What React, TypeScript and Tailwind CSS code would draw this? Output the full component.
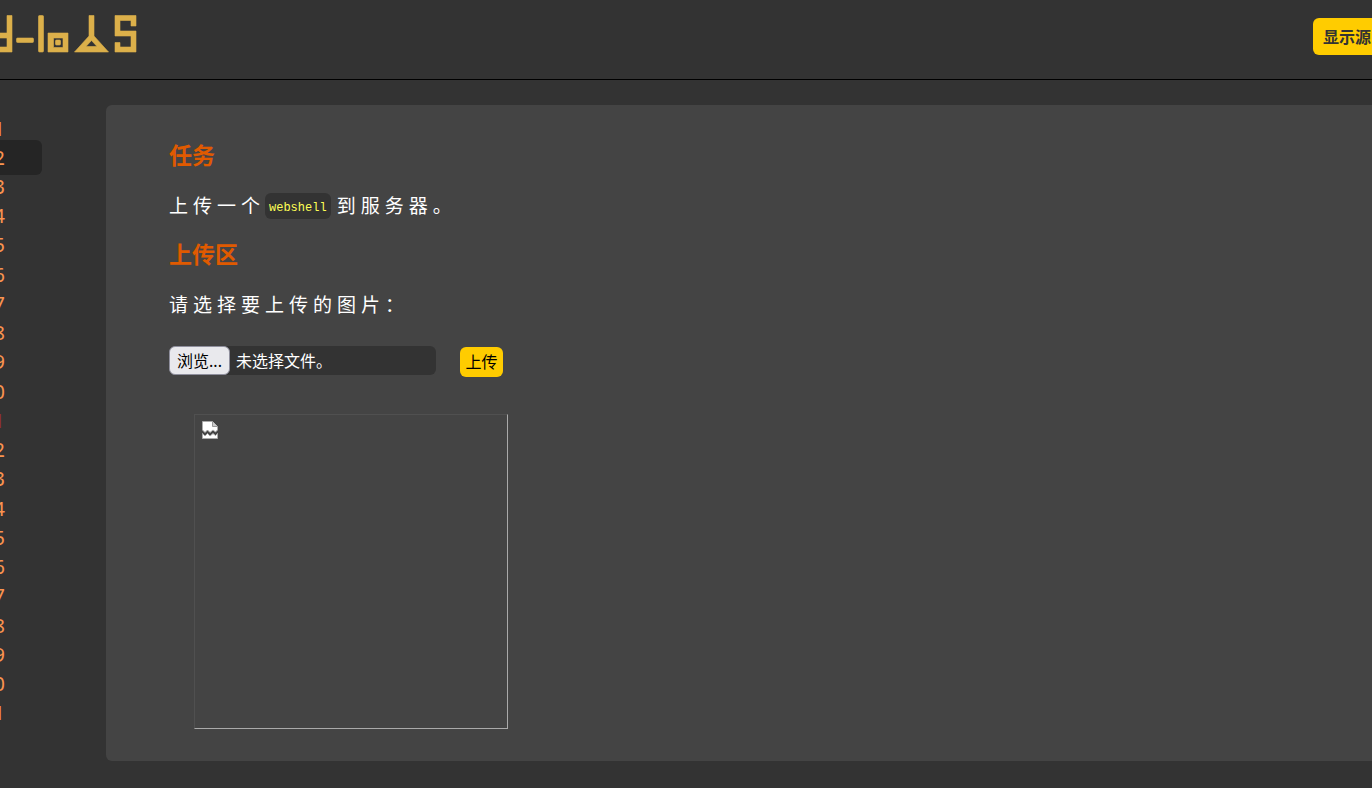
import React, { useState } from 'react'
import clsx from 'clsx'

const levels = Array.from({ length: 21 }, (_, i) => i + 1)

const Logo: React.FC = () => (
  <svg width="137" height="56" viewBox="0 0 137 56" fill="#dcb04a" stroke="#dcb04a" strokeWidth="0.6" strokeLinejoin="round" aria-hidden="true">
    <path d="M7 15.5h5V52H0v-5h7v-9H0v-5h7z" />
    <rect x="16.500" y="38" width="17" height="4.500" rx="1" />
    <rect x="38.5" y="15.5" width="5" height="36.5" rx="1" />
    <path fillRule="evenodd" d="M48 33h20v19H48zM53.5 38v9.5H63V38z" />
    <rect x="55.5" y="40" width="5" height="5" rx="1" />
    <path fillRule="evenodd" d="M89 15.5h5V36l14.500 16h-34L89 36zM91.5 40.500L86 46.500h11z" />
    <path d="M115 15.5h21V26h-5v-5.500h-11V31h16v21h-21v-9.500h5V47h11V36h-16z" />
  </svg>
)

const App: React.FC = () => {
  const [active, setActive] = useState(2)
  const [fileName, setFileName] = useState('')

  return (
    <div className="min-h-screen overflow-x-hidden bg-[#333] text-white font-['Noto_Sans','Noto_Sans_CJK_SC',sans-serif]">
      <header className="flex h-20 items-start justify-between border-b border-black">
        <Logo />
        <button className="mt-[18px] h-[37px] rounded-l-md bg-[#fc0] pl-[10px] pr-px text-base font-bold text-[#333] whitespace-nowrap">
          显示源
        </button>
      </header>

      <div className="flex pt-[25px] pb-[27px]">
        <nav className="-ml-2 mr-16 w-[50px] shrink-0 pt-[9px] pb-[33px]">
          <ul className="grid h-full auto-rows-fr">
            {levels.map((n) => (
              <li key={n} className="flex h-[29px] items-center">
                <a
                  href={`#pass-${n}`}
                  onClick={() => setActive(n)}
                  className={clsx(
                    'flex h-[35px] w-full shrink-0 items-center justify-end rounded-r-md pr-[37px] text-xl',
                    n === active && 'bg-[#252525]',
                    n === 11 ? 'text-[#932f2f]' : 'text-[#fa9450]'
                  )}
                >
                  {n % 10}
                </a>
              </li>
            ))}
          </ul>
        </nav>

        <main className="min-w-0 flex-1 rounded-l-md bg-[#444] pt-[31px] pb-8 pl-[63px]">
          <h3 className="text-[23px] leading-[38px] font-bold text-[#e05a00]">任务</h3>
          <p className="mt-[13px] flex h-[38px] items-center text-[19px] tracking-[5px]">
            上传一个
            <code className="mr-[6px] flex h-[26px] items-center rounded-md bg-[#333] px-1 pt-1 text-xs tracking-normal text-[#ff5] font-['Liberation_Mono',monospace]">
              webshell
            </code>
            到服务器。
          </p>
          <h3 className="mt-[10px] text-[23px] leading-[38px] font-bold text-[#e05a00]">上传区</h3>
          <p className="mt-[13px] flex h-[38px] items-center text-[19px] tracking-[5px]">请选择要上传的图片：</p>

          <form className="mt-[22px] flex items-start" onSubmit={(e) => e.preventDefault()}>
            <label className="flex h-[29px] w-[267px] items-center rounded-md bg-[#333] text-base">
              <input
                type="file"
                className="sr-only"
                onChange={(e) => setFileName(e.target.files?.[0]?.name ?? '')}
              />
              <span className="flex h-full w-[61px] items-center justify-center rounded-md border border-[#8f8f9d] bg-[#e9e9ed] text-black">
                浏览...
              </span>
              <span className="ml-[6px] truncate">{fileName || '未选择文件。'}</span>
            </label>
            <button className="mt-px ml-6 h-[30px] w-[43px] rounded-md bg-[#fc0] text-base text-black">上传</button>
          </form>

          <div className="mt-[37px] ml-[25px] h-[315px] w-[314px] border border-t-[#505050] border-l-[#505050] border-r-[#aaa] border-b-[#aaa] pt-[6px] pl-[7px]">
            <svg width="16" height="18" viewBox="0 0 16 18" aria-hidden="true">
              <path d="M.5.5h10l5 5V9l-2 2-2.500-2L8 11.500 5.500 9 3 11.500.5 9z" fill="#fff" stroke="#aaa" />
              <path d="M10.500.5v5h5" fill="#ccc" stroke="#999" />
              <path d="M.5 17.500v-5L3 15l2.500-2.500L8 15l3-2.500 2.500 2 2-2v5z" fill="#fff" stroke="#aaa" />
            </svg>
          </div>
        </main>
      </div>
    </div>
  )
}

export default App
